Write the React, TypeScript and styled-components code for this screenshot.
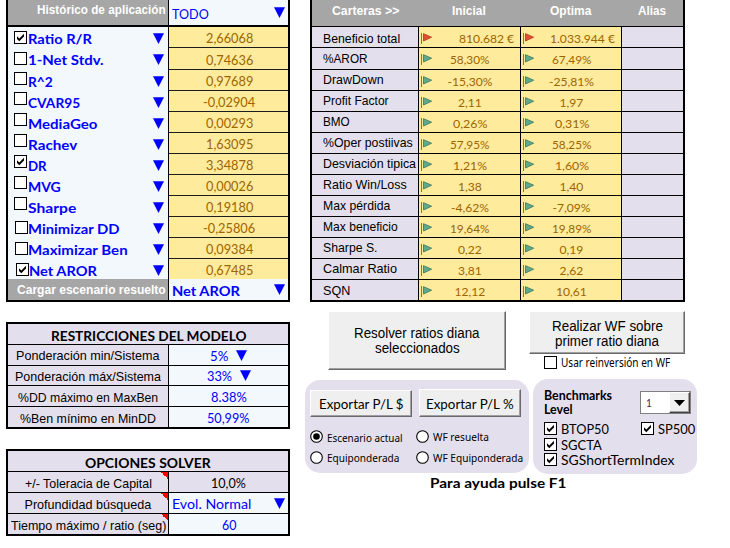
import React, { useLayoutEffect, useRef, useState } from 'react';
import styled, { createGlobalStyle } from 'styled-components';

const GlobalStyle = createGlobalStyle`
  * { box-sizing: border-box; }
  body { margin: 0; background: #fff; }
`;

const ARIAL = '"Liberation Sans", Arial, sans-serif';
const CALIBRI = 'Lato, Calibri, sans-serif';
const SEGOE = '"Noto Sans", "Segoe UI", sans-serif';

const GRAY = '#a6a6a6';
const ICE = '#f2f8fc';
const LAVENDER = '#e4dfec';
const YELLOW = '#ffeb9c';
const BROWN = '#9c6500';
const BLUE = '#0000ff';

/* ---------- text ---------- */

interface TextProps {
  $font?: string;
  $size?: number;
  $bold?: boolean;
  $color?: string;
  $w: number;
  $dy?: number;
}

const TextBox = styled.span<TextProps>`
  display: block;
  flex: none;
  width: ${(p) => p.$w}px;
  height: 15px;
  line-height: 15px;
  white-space: nowrap;
  font-family: ${(p) => p.$font ?? CALIBRI};
  font-size: ${(p) => p.$size ?? 13}px;
  font-weight: ${(p) => (p.$bold ? 700 : 400)};
  color: ${(p) => p.$color ?? '#000'};
  margin-top: ${(p) => (p.$dy ?? 0) * 2}px;
`;

const TextRun = styled.span`
  display: inline-block;
  transform-origin: 0 50%;
`;

/* Condenses or stretches one line of text to the width of its box. */
function Text({ children, ...box }: TextProps & { children: string }) {
  const ref = useRef<HTMLSpanElement>(null);
  const [scale, setScale] = useState(1);
  useLayoutEffect(() => {
    const natural = ref.current?.offsetWidth ?? 0;
    if (natural) setScale(box.$w / natural);
  }, [children, box.$w]);
  return (
    <TextBox {...box}>
      <TextRun ref={ref} style={{ transform: `scaleX(${scale})` }}>
        {children}
      </TextRun>
    </TextBox>
  );
}

/* ---------- small drawings ---------- */

const Svg = styled.svg`
  display: block;
  flex: none;
`;

const DropArrow = () => (
  <Svg width="11" height="11" viewBox="0 0 11 11">
    <path d="M0 0.3H11L5.5 11Z" fill={BLUE} />
  </Svg>
);

const Flag = ({ red }: { red?: boolean }) => (
  <Svg width="12" height="12" viewBox="0 0 12 12">
    <path d="M0.5 0V11" stroke="#7b7464" strokeWidth="1" />
    <path
      d="M2.5 0.7L10.6 4.2L2.5 8Z"
      fill={red ? '#e2512f' : '#5fa98c'}
      stroke={red ? '#b5432a' : '#3f7f69'}
      strokeWidth="0.9"
    />
  </Svg>
);

const Box = styled.span<{ $top?: number; $left?: number }>`
  flex: none;
  width: 13px;
  height: 13px;
  border: 1px solid #000;
  background: #fff;
  margin: ${(p) => p.$top ?? 0}px 0 0 ${(p) => p.$left ?? 0}px;
`;

function Check({ on, top, left }: { on?: boolean; top?: number; left?: number }) {
  return (
    <Box $top={top} $left={left}>
      {on && (
        <Svg width="11" height="11" viewBox="0 0 11 11">
          <path d="M2 4.2L4.3 6.5L9 1.8V4.6L4.3 9.3L2 7Z" fill="#000" />
        </Svg>
      )}
    </Box>
  );
}

const Radio = ({ on }: { on?: boolean }) => (
  <Svg width="13" height="13" viewBox="0 0 13 13">
    <circle cx="6.5" cy="6.5" r="5.8" fill="#fff" stroke="#000" strokeWidth="1.1" />
    {on && <circle cx="6.5" cy="6.5" r="3.3" fill="#000" />}
  </Svg>
);

/* ---------- page frame ---------- */

const Page = styled.main`
  display: flex;
  width: 730px;
  height: 548px;
  overflow: hidden;
  background: #fff;
`;

const LeftColumn = styled.div`
  flex: none;
  width: 305px;
  padding-left: 6px;
`;

const RightColumn = styled.div`
  flex: 1;
`;

/* ---------- left: ratios ---------- */

const Sheet = styled.section<{ $top?: number; $open?: boolean }>`
  width: 284px;
  margin-top: ${(p) => p.$top ?? 0}px;
  border: 2px solid #000;
  border-top-width: ${(p) => (p.$open ? 0 : 2)}px;
`;

const SheetRow = styled.div<{ $h: number; $line?: number }>`
  display: grid;
  grid-template-columns: 160px 120px;
  grid-template-rows: 100%;
  height: ${(p) => p.$h}px;
  border-bottom: ${(p) => p.$line ?? 0}px solid #000;
`;

const GrayCell = styled.div`
  display: flex;
  align-items: center;
  justify-content: flex-end;
  padding-right: 2px;
  background: ${GRAY};
`;

const PickCell = styled.div`
  display: flex;
  align-items: center;
  justify-content: space-between;
  padding: 0 3px 0 3px;
  border-left: 1px solid #000;
  background: ${ICE};
`;

const RatioName = styled.div`
  display: flex;
  background: ${ICE};
`;

const NameSlot = styled.div<{ $gap: number }>`
  display: flex;
  flex: 1;
  align-items: center;
  justify-content: space-between;
  height: 21px;
  padding: 1px 4px 0 ${(p) => p.$gap}px;
`;

const RatioValue = styled.div<{ $last?: boolean }>`
  display: flex;
  align-items: center;
  justify-content: center;
  padding-left: 1px;
  border-left: 1px solid #000;
  border-bottom: ${(p) => (p.$last ? 0 : 1)}px solid #1c1c1c;
  background: ${YELLOW};
`;

const ratios: { name: string; w: number; value: string; h: number; top: number; left?: number; on?: boolean }[] = [
  { name: 'Ratio R/R', w: 64, value: '2,66068', h: 21, top: 4, on: true },
  { name: '1-Net Stdv.', w: 76, value: '0,74636', h: 22, top: 4 },
  { name: 'R^2', w: 24.5, value: '0,97689', h: 21, top: 2 },
  { name: 'CVAR95', w: 52, value: '-0,02904', h: 21, top: 1 },
  { name: 'MediaGeo', w: 70, value: '0,00293', h: 21, top: 1 },
  { name: 'Rachev', w: 49, value: '1,63095', h: 21, top: 1 },
  { name: 'DR', w: 19, value: '3,34878', h: 21, top: 1, on: true },
  { name: 'MVG', w: 33, value: '0,00026', h: 21, top: 1 },
  { name: 'Sharpe', w: 48, value: '0,19180', h: 21, top: 1 },
  { name: 'Minimizar DD', w: 92, value: '-0,25806', h: 21, top: 4, left: 7 },
  { name: 'Maximizar Ben', w: 100, value: '0,09384', h: 21, top: 4, left: 7 },
  { name: 'Net AROR', w: 68, value: '0,67485', h: 20, top: 4, left: 8, on: true },
];

/* ---------- left: parameter tables ---------- */

const TitleRow = styled.div<{ $h: number }>`
  display: flex;
  align-items: center;
  justify-content: center;
  height: ${(p) => p.$h}px;
  border-bottom: 1px solid #000;
  background: ${LAVENDER};
`;

const ParamLabel = styled.div<{ $note?: boolean }>`
  display: flex;
  align-items: center;
  justify-content: center;
  background: ${(p) =>
    p.$note ? `linear-gradient(45deg, transparent 50%, #ff0000 50%) 100% 0 / 7px 7px no-repeat, ${LAVENDER}` : LAVENDER};
`;

const ParamValue = styled.div<{ $plain?: boolean; $spread?: boolean; $gap?: number }>`
  display: flex;
  align-items: center;
  justify-content: ${(p) => (p.$spread ? 'space-between' : 'center')};
  gap: ${(p) => p.$gap ?? 0}px;
  padding: ${(p) => (p.$spread ? '0 3px' : '0')};
  border-left: 1px solid #000;
  background: ${(p) => (p.$plain ? LAVENDER : ICE)};
`;

interface Param {
  label: string;
  lw: number;
  value: string;
  vw: number;
  h: number;
  dy?: number;
  arrow?: boolean;
  gap?: number;
  note?: boolean;
  plain?: boolean;
  spread?: boolean;
}

const limits: Param[] = [
  { label: 'Ponderación min/Sistema', lw: 144, value: '5%', vw: 18, h: 21, arrow: true, gap: 8 },
  { label: 'Ponderación máx/Sistema', lw: 146, value: '33%', vw: 25, h: 20, arrow: true, gap: 8 },
  { label: '%DD máximo en MaxBen', lw: 140, value: '8.38%', vw: 36, h: 21, dy: 2.5 },
  { label: '%Ben mínimo en MinDD', lw: 136, value: '50,99%', vw: 43, h: 20, dy: 2.5 },
];

const solver: Param[] = [
  { label: '+/- Toleracia de Capital', lw: 127, value: '10,0%', vw: 35, h: 21, dy: 2, note: true, plain: true },
  { label: 'Profundidad búsqueda', lw: 127, value: 'Evol. Normal', vw: 79, h: 21, dy: 2, note: true, arrow: true, spread: true },
  { label: 'Tiempo máximo / ratio (seg)', lw: 155, value: '60', vw: 14, h: 20, dy: 2, note: true },
];

function ParamRows({ rows }: { rows: Param[] }) {
  return (
    <>
      {rows.map((r, i) => (
        <SheetRow key={r.label} $h={r.h} $line={i < rows.length - 1 ? 1 : 0}>
          <ParamLabel $note={r.note}>
            <Text $font={ARIAL} $size={12.6} $w={r.lw} $dy={r.dy ?? 1.5}>{r.label}</Text>
          </ParamLabel>
          <ParamValue $plain={r.plain} $spread={r.spread} $gap={r.gap}>
            <Text $size={13.3} $w={r.vw} $dy={1} $color={r.plain ? '#000' : BLUE}>{r.value}</Text>
            {r.arrow && <DropArrow />}
          </ParamValue>
        </SheetRow>
      ))}
    </>
  );
}

/* ---------- right: portfolios ---------- */

const Portfolio = styled.section`
  width: 375px;
  margin-left: 5px;
  border: solid #000;
  border-width: 0 2px 2px;
`;

const PortfolioHead = styled.div`
  display: grid;
  grid-template-columns: 106px 102px 101px 62px;
  height: 27px;
  padding-bottom: 4px;
  align-items: center;
  justify-items: center;
  border-bottom: 1px solid #000;
  background: ${GRAY};
`;

const PortfolioRow = styled.div<{ $h: number; $last?: boolean }>`
  display: grid;
  grid-template-columns: 106px 102px 101px 62px;
  grid-template-rows: 100%;
  height: ${(p) => p.$h}px;
  border-bottom: ${(p) => (p.$last ? 0 : 1)}px solid #000;
`;

const MetricName = styled.div<{ $top: number }>`
  padding: ${(p) => p.$top}px 0 0 11px;
  background: ${LAVENDER};
`;

const MetricValue = styled.div<{ $money?: boolean }>`
  display: grid;
  grid-template-columns: 12px 1fr;
  justify-items: ${(p) => (p.$money ? 'end' : 'center')};
  align-items: start;
  padding: 6px ${(p) => (p.$money ? 6 : 13)}px 0 2px;
  border-left: 1px solid #000;
  background: ${YELLOW};
`;

const AliasCell = styled.div`
  border-left: 1px solid #000;
  background: ${LAVENDER};
`;

type Metric = [name: string, w: number, a: string, aw: number, b: string, bw: number];

const metrics: Metric[] = [
  ['Beneficio total', 77, '810.682 €', 55, '1.033.944 €', 65],
  ['%AROR', 45, '58,30%', 40, '67,49%', 40],
  ['DrawDown', 61, '-15,30%', 45, '-25,81%', 45],
  ['Profit Factor', 66, '2,11', 24, '1,97', 24],
  ['BMO', 27, '0,26%', 34, '0,31%', 34],
  ['%Oper postiivas', 90, '57,95%', 40, '58,25%', 40],
  ['Desviación tipica', 93.5, '1,21%', 33.5, '1,60%', 33.5],
  ['Ratio Win/Loss', 84, '1,38', 24, '1,40', 24],
  ['Max pérdida', 67, '-4,62%', 38, '-7,09%', 38],
  ['Max beneficio', 75, '19,64%', 40, '19,89%', 40],
  ['Sharpe S.', 54.5, '0,22', 24, '0,19', 24],
  ['Calmar Ratio', 73.5, '3,81', 24, '2,62', 24],
  ['SQN', 27, '12,12', 31, '10,61', 31],
];

const metricHeight = (i: number) => {
  if (i === 1) return 22;
  return i === metrics.length - 1 ? 20 : 21;
};

/* ---------- right: controls ---------- */

const Actions = styled.div`
  display: flex;
  gap: 23px;
  height: 77px;
  padding: 9px 0 0 23px;
`;

const PushButton = styled.button<{ $w: number; $h: number; $top?: number; $pad?: number }>`
  display: flex;
  flex: none;
  flex-direction: column;
  align-items: center;
  justify-content: center;
  width: ${(p) => p.$w}px;
  height: ${(p) => p.$h}px;
  margin: ${(p) => p.$top ?? 0}px 0 0;
  padding: ${(p) => p.$pad ?? 0}px 0 0;
  border: 1px solid;
  border-color: #fff #696969 #696969 #fff;
  box-shadow: inset -1px -1px 0 #a0a0a0;
  background: #efefef;
`;

const Option = styled.label<{ $top?: number; $left?: number }>`
  display: flex;
  align-items: center;
  gap: 4px;
  height: 13px;
  margin: ${(p) => p.$top ?? 0}px 0 0 ${(p) => p.$left ?? 0}px;
`;

const Panels = styled.div`
  display: flex;
  align-items: flex-start;
  gap: 4px;
`;

const ExportPanel = styled.div`
  width: 224px;
  height: 93px;
  margin-top: 1px;
  padding: 9px 0 0 5px;
  border-radius: 15px;
  background: ${LAVENDER};
`;

const ExportButtons = styled.div`
  display: flex;
  gap: 7px;
`;

const RadioGrid = styled.div`
  display: grid;
  grid-template-columns: 106px 1fr;
  row-gap: 8px;
  margin-top: 13px;
`;

const BenchPanel = styled.div`
  width: 164px;
  height: 95px;
  padding: 8px 0 0 11px;
  border-radius: 15px;
  background: ${LAVENDER};
`;

const BenchHead = styled.div`
  display: flex;
  justify-content: space-between;
  height: 35px;
  padding-right: 6px;
`;

const Combo = styled.div`
  display: flex;
  justify-content: space-between;
  width: 51px;
  height: 23px;
  margin-top: 4px;
  padding-left: 5px;
  border: 1px solid #808080;
  background: #fff;
`;

const ComboButton = styled.span`
  display: grid;
  place-items: center;
  width: 21px;
  height: 21px;
  border: 1px solid;
  border-color: #fff #404040 #404040 #fff;
  box-shadow: inset -1px -1px 0 #a0a0a0;
  background: #efefef;
`;

const BenchRow = styled.div`
  display: grid;
  grid-template-columns: 97px 1fr;
`;

const Help = styled.p`
  margin: 1px 0 0 125px;
`;

export default function App() {
  return (
    <>
      <GlobalStyle />
      <Page>
        <LeftColumn>
          <Sheet $open>
            <SheetRow $h={27} $line={2}>
              <GrayCell>
                <Text $font={ARIAL} $size={12.3} $bold $w={129} $color="#fff" $dy={-2.5}>Histórico de aplicación</Text>
              </GrayCell>
              <PickCell>
                <Text $w={37} $color={BLUE} $dy={2} $size={13.6}>TODO</Text>
                <DropArrow />
              </PickCell>
            </SheetRow>
            {ratios.map((r, i) => (
              <SheetRow key={r.name} $h={r.h}>
                <RatioName>
                  <Check on={r.on} top={r.top} left={r.left ?? 6} />
                  <NameSlot $gap={Math.max(0, 7 - (r.left ?? 6))}>
                    <Text $bold $size={14} $w={r.w} $color={BLUE}>{r.name}</Text>
                    <DropArrow />
                  </NameSlot>
                </RatioName>
                <RatioValue $last={i === ratios.length - 1}>
                  <Text $size={13.3} $w={r.value.startsWith('-') ? 52 : 47} $color={BROWN} $dy={1.5}>{r.value}</Text>
                </RatioValue>
              </SheetRow>
            ))}
            <SheetRow $h={21}>
              <GrayCell>
                <Text $font={ARIAL} $size={12.3} $bold $w={149} $color="#fff" $dy={0.5}>Cargar escenario resuelto</Text>
              </GrayCell>
              <PickCell>
                <Text $bold $size={14} $w={68} $color={BLUE} $dy={0.5}>Net AROR</Text>
                <DropArrow />
              </PickCell>
            </SheetRow>
          </Sheet>

          <Sheet $top={20}>
            <TitleRow $h={21}>
              <Text $bold $size={13.8} $w={195} $dy={1}>RESTRICCIONES DEL MODELO</Text>
            </TitleRow>
            <ParamRows rows={limits} />
          </Sheet>

          <Sheet $top={20}>
            <TitleRow $h={21}>
              <Text $bold $size={13.8} $w={126} $dy={1}>OPCIONES SOLVER</Text>
            </TitleRow>
            <ParamRows rows={solver} />
          </Sheet>
        </LeftColumn>

        <RightColumn>
          <Portfolio>
            <PortfolioHead>
              <Text $font={ARIAL} $bold $size={12.6} $w={67} $color="#fff">{'Carteras >>'}</Text>
              <Text $font={ARIAL} $bold $size={12.6} $w={34} $color="#fff">Inicial</Text>
              <Text $font={ARIAL} $bold $size={12.6} $w={41} $color="#fff">Optima</Text>
              <Text $font={ARIAL} $bold $size={12.6} $w={28} $color="#fff">Alias</Text>
            </PortfolioHead>
            {metrics.map(([name, w, a, aw, b, bw], i) => {
              const last = i === metrics.length - 1;
              return (
                <PortfolioRow key={name} $h={metricHeight(i)} $last={last}>
                  <MetricName $top={i === 0 ? 5 : last || i === 1 ? 4 : 3}>
                    <Text $font={ARIAL} $size={12.6} $w={w}>{name}</Text>
                  </MetricName>
                  <MetricValue $money={i === 0}>
                    <Flag red={i === 0} />
                    <Text $size={12.1} $w={aw} $color={BROWN} $dy={-1}>{a}</Text>
                  </MetricValue>
                  <MetricValue $money={i === 0}>
                    <Flag red={i === 0} />
                    <Text $size={12.1} $w={bw} $color={BROWN} $dy={-1}>{b}</Text>
                  </MetricValue>
                  <AliasCell />
                </PortfolioRow>
              );
            })}
          </Portfolio>

          <Actions>
            <PushButton $w={178} $h={59}>
              <Text $font={ARIAL} $size={14} $w={126}>Resolver ratios diana</Text>
              <Text $font={ARIAL} $size={14} $w={85}>seleccionados</Text>
            </PushButton>
            <div>
              <PushButton $w={156} $h={43} $pad={2}>
                <Text $font={ARIAL} $size={14} $w={111}>Realizar WF sobre</Text>
                <Text $font={ARIAL} $size={14} $w={104}>primer ratio diana</Text>
              </PushButton>
              <Option $top={2} $left={15}>
                <Check />
                <Text $font={SEGOE} $size={11.8} $w={109}>Usar reinversión en WF</Text>
              </Option>
            </div>
          </Actions>

          <Panels>
            <ExportPanel>
              <ExportButtons>
                <PushButton $w={102} $h={27} $top={1}>
                  <Text $size={13.8} $w={85}>Exportar P/L $</Text>
                </PushButton>
                <PushButton $w={102} $h={28}>
                  <Text $size={13.8} $w={88}>Exportar P/L %</Text>
                </PushButton>
              </ExportButtons>
              <RadioGrid>
                <Option>
                  <Radio on />
                  <Text $font={SEGOE} $size={11.6} $w={76} $dy={0.5}>Escenario actual</Text>
                </Option>
                <Option>
                  <Radio />
                  <Text $font={SEGOE} $size={11.6} $w={56}>WF resuelta</Text>
                </Option>
                <Option>
                  <Radio />
                  <Text $font={SEGOE} $size={11.6} $w={72}>Equiponderada</Text>
                </Option>
                <Option>
                  <Radio />
                  <Text $font={SEGOE} $size={11.6} $w={90}>WF Equiponderada</Text>
                </Option>
              </RadioGrid>
            </ExportPanel>

            <BenchPanel>
              <BenchHead>
                <div>
                  <Text $bold $size={12.4} $w={68} $dy={0.5}>Benchmarks</Text>
                  <Text $bold $size={12.4} $w={29} $dy={-0.5}>Level</Text>
                </div>
                <Combo>
                  <Text $size={11.7} $w={6} $color="#4b1a5a" $dy={1.5}>1</Text>
                  <ComboButton>
                    <Svg width="11" height="6" viewBox="0 0 11 6">
                      <path d="M0 0H11L5.5 6Z" fill="#000" />
                    </Svg>
                  </ComboButton>
                </Combo>
              </BenchHead>
              <BenchRow>
                <Option>
                  <Check on />
                  <Text $size={13.3} $w={48} $dy={1}>BTOP50</Text>
                </Option>
                <Option>
                  <Check on />
                  <Text $size={13.3} $w={37} $dy={1}>SP500</Text>
                </Option>
              </BenchRow>
              <Option $top={3}>
                <Check on />
                <Text $size={13.3} $w={41} $dy={1}>SGCTA</Text>
              </Option>
              <Option $top={2}>
                <Check on />
                <Text $size={13.3} $w={113} $dy={1}>SGShortTermIndex</Text>
              </Option>
            </BenchPanel>
          </Panels>

          <Help>
            <Text $bold $size={13.8} $w={136}>Para ayuda pulse F1</Text>
          </Help>
        </RightColumn>
      </Page>
    </>
  );
}
